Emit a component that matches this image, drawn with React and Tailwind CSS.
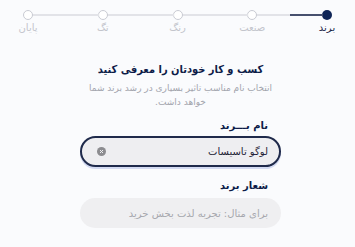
import { useState } from "react";

// مراحل ویزارد
const STEPS = ["برند", "صنعت", "رنگ", "تگ", "پایان"];

function Stepper({ current = 0 }) {
  return (
    <div className="flex items-start px-2 pt-[10px]">
      {STEPS.map((label, i) => (
        <div key={label} className={`flex items-start ${i < STEPS.length - 1 ? "flex-1" : ""}`}>
          {/* ── دایره و عنوان ── */}
          <div className="flex w-[40px] flex-col items-center">
            <span
              className={
                i === current
                  ? "block h-[10px] w-[10px] rounded-full bg-[#0f2557]"
                  : "block h-[10px] w-[10px] rounded-full border border-[#c9cbd3] bg-white"
              }
            />
            <span
              className={`mt-[1px] text-[10px] leading-[14px] ${
                i === current ? "text-[#1a2547]" : "text-[#c3c5cc]"
              }`}
            >
              {label}
            </span>
          </div>
          {/* ── خط اتصال ── */}
          {i < STEPS.length - 1 && (
            <div className="mt-[4px] flex h-[2px] flex-1 -mx-[16px]">
              <span className={`h-full flex-1 ${i === current ? "bg-[#46506e]" : "bg-[#e2e3e8]"}`} />
              <span className="h-full flex-1 bg-[#e2e3e8]" />
            </div>
          )}
        </div>
      ))}
    </div>
  );
}

export default function App() {
  const [name, setName] = useState("لوگو تاسیسات");
  const [slogan, setSlogan] = useState("");

  return (
    <div
      dir="rtl"
      className="h-[247px] w-[355px] overflow-hidden bg-[#fafbfd]"
      style={{ fontFamily: '"DejaVu Sans", "Noto Sans", sans-serif' }}
    >
      <Stepper current={0} />

      <div className="pr-[74px] pl-[80px] pt-[27px]">
        {/* ── عنوان ── */}
        <h1 className="text-center font-['DejaVu_Sans_Condensed','DejaVu_Sans',sans-serif] text-[11px] font-bold leading-[16px] text-[#0d1b48]">
          کسب و کار خودتان را معرفی کنید
        </h1>
        <p className="mx-auto mt-[3px] w-[196px] text-center text-[9px] leading-[14px] text-[#a3a5ad]">
          انتخاب نام مناسب تاثیر بسیاری در رشد برند شما خواهد داشت.
        </p>

        {/* ── نام برند ── */}
        <label className="mt-[10px] block pr-[13px] text-[10px] font-bold leading-[14px] text-[#0d1b48]">
          نام بـــرند
        </label>
        <div className="mt-[3px] flex h-[31px] items-center rounded-full border-2 border-[#1f2a4b] bg-[#eeeef1] pr-[11px] pl-[15px] shadow-[0_2px_0_#d3daf2]">
          <input
            value={name}
            onChange={(e) => setName(e.target.value)}
            className="min-w-0 flex-1 bg-transparent text-[10px] text-[#1e2235] outline-none"
          />
          <button
            type="button"
            onClick={() => setName("")}
            className="flex h-[9px] w-[9px] items-center justify-center rounded-full bg-[#8c8c90]"
          >
            <svg viewBox="0 0 10 10" className="h-[5px] w-[5px]" stroke="#eeeef1" strokeWidth="2">
              <path d="M2 2l6 6M8 2l-6 6" />
            </svg>
          </button>
        </div>

        {/* ── شعار برند ── */}
        <label className="mt-[12px] block pr-[13px] text-[10px] font-bold leading-[14px] text-[#0d1b48]">
          شعار برند
        </label>
        <div className="mt-[5px] flex h-[30px] items-center rounded-full bg-[#efeff1] pr-[13px] pl-[15px]">
          <input
            value={slogan}
            onChange={(e) => setSlogan(e.target.value)}
            placeholder="برای مثال: تجربه لذت بخش خرید"
            className="min-w-0 flex-1 bg-transparent text-[10px] text-[#1e2235] outline-none placeholder:text-[#a6a7ad]"
          />
        </div>
      </div>
    </div>
  );
}
